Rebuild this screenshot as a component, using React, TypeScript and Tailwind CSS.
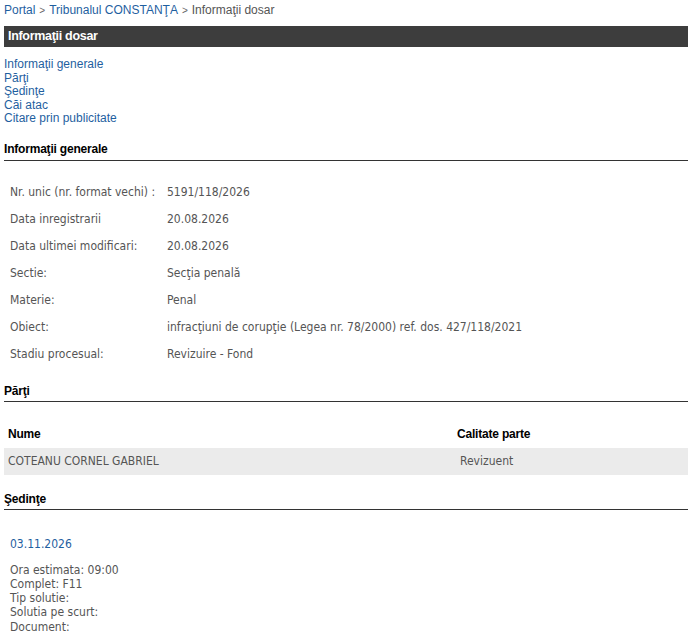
const general: [string, string][] = [
  ["Nr. unic (nr. format vechi) :", "5191/118/2026"],
  ["Data inregistrarii", "20.08.2026"],
  ["Data ultimei modificari:", "20.08.2026"],
  ["Sectie:", "Secţia penală"],
  ["Materie:", "Penal"],
  ["Obiect:", "infracţiuni de corupţie (Legea nr. 78/2000) ref. dos. 427/118/2021"],
  ["Stadiu procesual:", "Revizuire - Fond"],
];

const anchors = ["Informaţii generale", "Părţi", "Şedinţe", "Căi atac", "Citare prin publicitate"];

function SectionTitle({ title, pad = "pb-[3px]" }: { title: string; pad?: string }) {
  return (
    <h3 className={`border-b border-[#333] ${pad} text-[12px] font-bold leading-[15px] tracking-[-0.2px] text-black`}>
      {title}
    </h3>
  );
}

export default function App() {
  return (
    <div className="bg-white px-[4px] pr-[5px] font-['Liberation_Sans',Arial,sans-serif] text-[12px]">
      {/* breadcrumb */}
      <div className="pt-[3px] leading-[15px]">
        <a className="text-[#1f5f9f]">Portal</a>
        <span className="px-[4px] text-[10px] text-[#666]">&gt;</span>
        <a className="text-[#1f5f9f]">Tribunalul CONSTANŢA</a>
        <span className="px-[4px] text-[10px] text-[#666]">&gt;</span>
        <span className="text-[#555]">Informaţii dosar</span>
      </div>

      <div className="mt-[8px] flex h-[21px] items-center bg-[#3d3d3d] px-[4px] text-[12.5px] font-bold tracking-[-0.3px] text-white">
        Informaţii dosar
      </div>

      <ul className="mt-[11px] leading-[13.5px] text-[#1f5f9f]">
        {anchors.map((a) => (
          <li key={a}>{a}</li>
        ))}
      </ul>

      <div className="mt-[16px]">
        <SectionTitle title="Informaţii generale" />
        <table className="mt-[18px] font-['DejaVu_Sans_Condensed',Tahoma,sans-serif] text-[12px] text-[#555]">
          <tbody>
            {general.map(([k, v]) => (
              <tr key={k} className="h-[27px]">
                <td className="w-[163px] pl-[6px]">{k}</td>
                <td>{v}</td>
              </tr>
            ))}
          </tbody>
        </table>
      </div>

      <div className="mt-[16px]">
        <SectionTitle title="Părţi" pad="pb-[2px]" />
        <table className="mt-[19px] w-full text-[12px]">
          <thead>
            <tr className="h-[27px] text-left font-bold tracking-[-0.2px] text-black">
              <th className="pl-[4px]">Nume</th>
              <th className="w-[231px] pl-[0px]">Calitate parte</th>
            </tr>
          </thead>
          <tbody className="font-['DejaVu_Sans_Condensed',Tahoma,sans-serif] text-[12px] text-[#555]">
            <tr className="h-[27px] bg-[#ebebeb]">
              <td className="pl-[4px]">COTEANU CORNEL GABRIEL</td>
              <td className="pl-[3px]">Revizuent</td>
            </tr>
          </tbody>
        </table>
      </div>

      <div className="mt-[17px]">
        <SectionTitle title="Şedinţe" pad="pb-[2px]" />
        <div className="mt-[27px] pl-[6px] font-['DejaVu_Sans_Condensed',Tahoma,sans-serif] text-[12px]">
          <div className="leading-[15px] text-[#1f5f9f]">03.11.2026</div>
          <div className="mt-[11px] leading-[14.3px] text-[#555]">
            <div>Ora estimata: 09:00</div>
            <div>Complet: F11</div>
            <div>Tip solutie:</div>
            <div>Solutia pe scurt:</div>
            <div>Document:</div>
          </div>
        </div>
      </div>
    </div>
  );
}
